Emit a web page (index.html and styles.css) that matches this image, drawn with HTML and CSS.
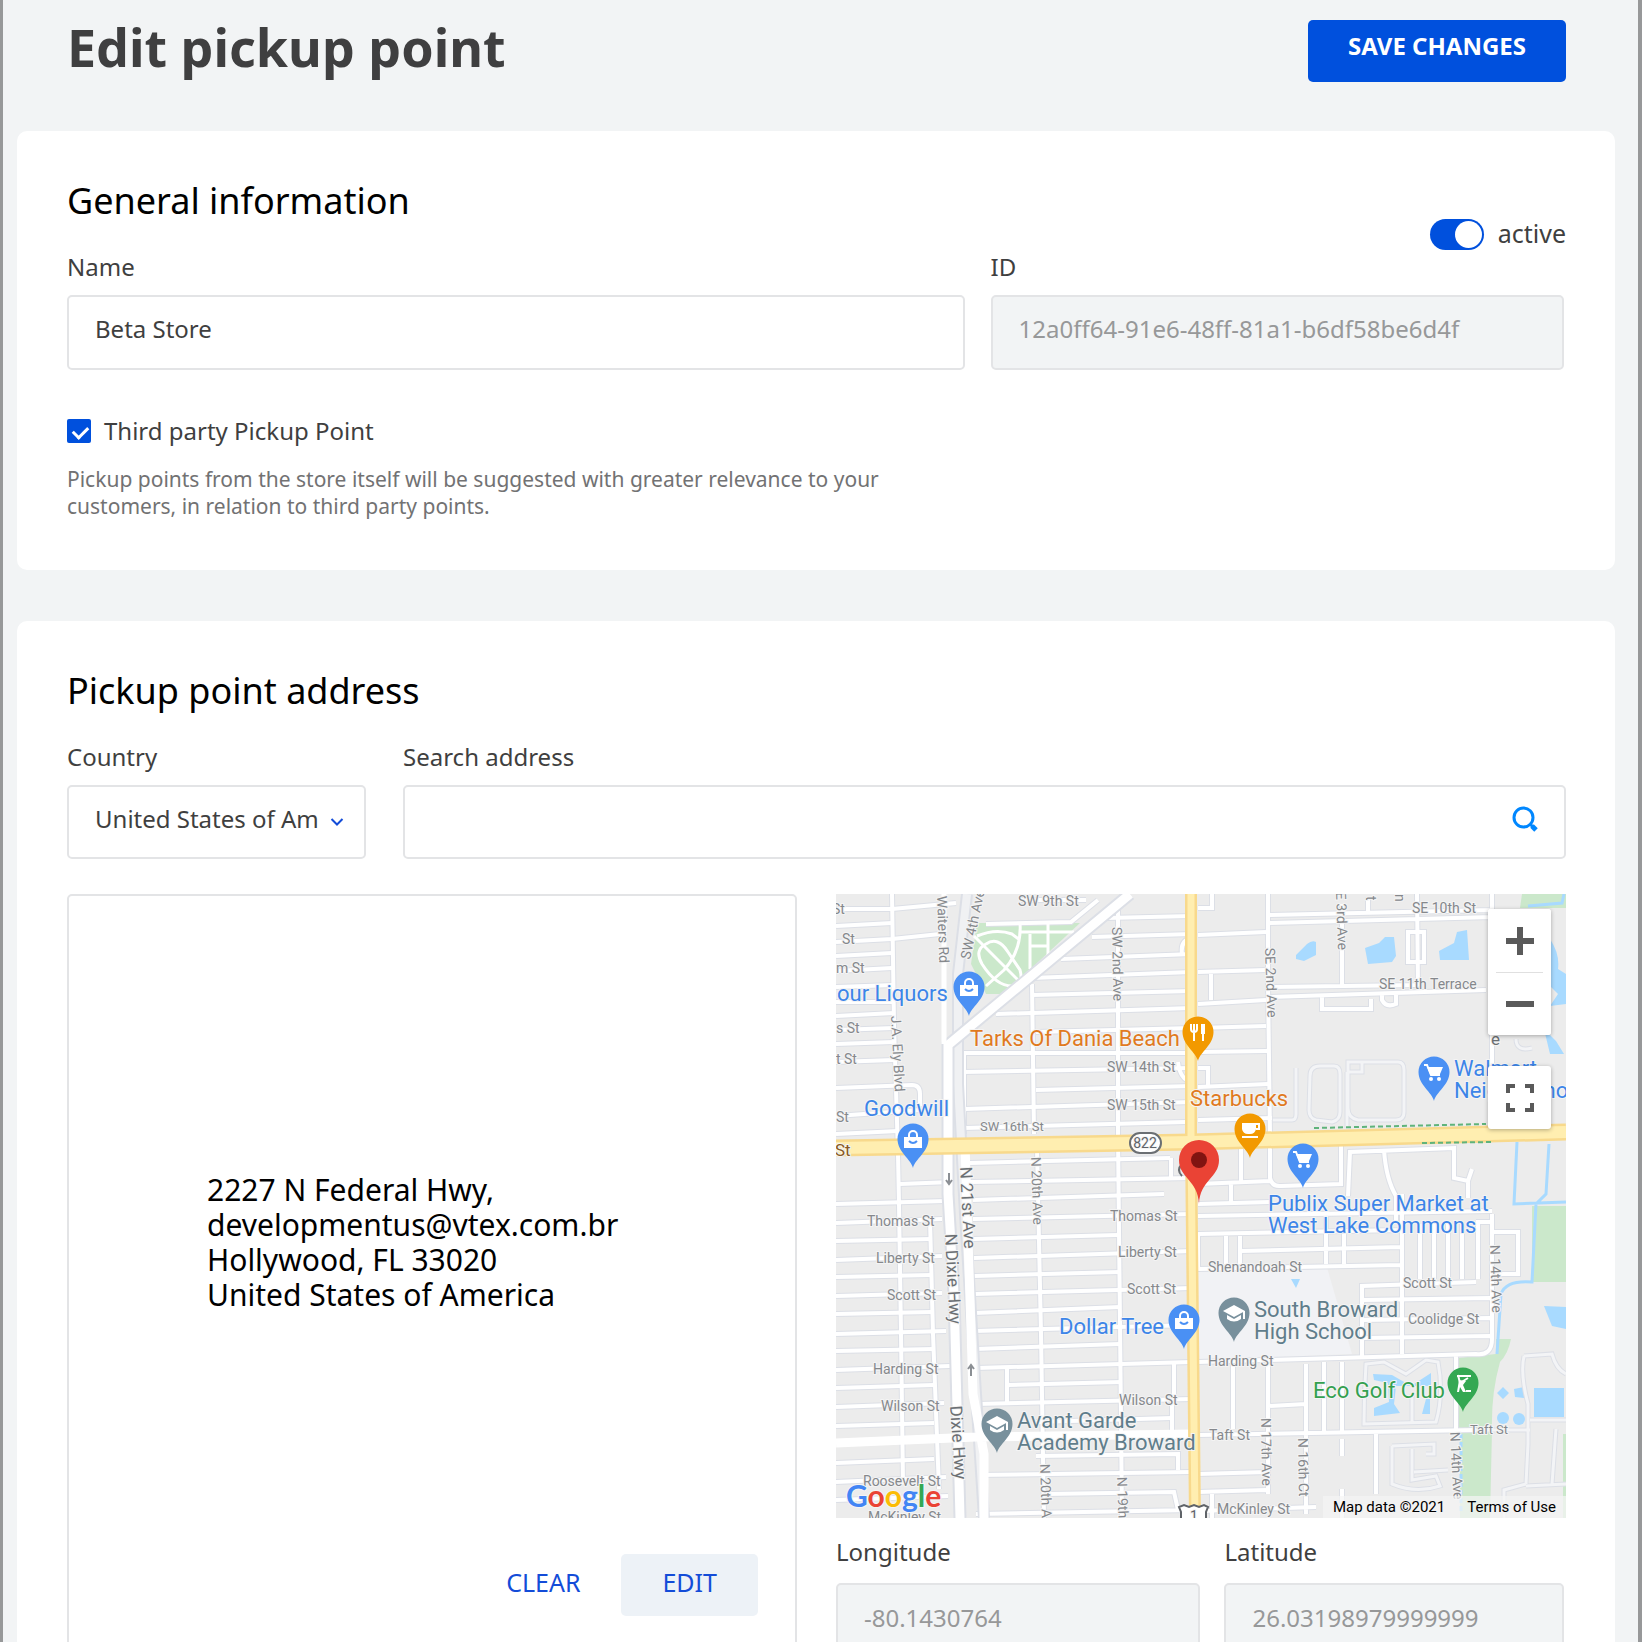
FILE: index.html
```html
<!DOCTYPE html>
<html lang="en">
<head>
<meta charset="utf-8">
<title>Edit pickup point</title>
<link rel="stylesheet" href="styles.css">
</head>
<body>
<main class="page">
  <header class="page-header">
    <h1 class="page-title">Edit pickup point</h1>
    <button class="button button-primary" type="button">SAVE CHANGES</button>
  </header>

  <section class="card">
    <div class="card-head">
      <h2 class="card-title">General information</h2>
      <label class="switch"><input class="switch-input" type="checkbox" checked>active</label>
    </div>
    <div class="row row-general">
      <div class="field">
        <label class="label" for="name">Name</label>
        <input class="input" id="name" type="text" value="Beta Store">
      </div>
      <div class="field">
        <label class="label" for="pickup-id">ID</label>
        <input class="input" id="pickup-id" type="text" value="12a0ff64-91e6-48ff-81a1-b6df58be6d4f" disabled>
      </div>
    </div>
    <label class="check"><input class="check-input" type="checkbox" checked>Third party Pickup Point</label>
    <p class="help">Pickup points from the store itself will be suggested with greater relevance to your customers, in relation to third party points.</p>
  </section>

  <section class="card">
    <div class="card-head">
      <h2 class="card-title">Pickup point address</h2>
    </div>
    <div class="row row-search">
      <div class="field">
        <label class="label" for="country">Country</label>
        <div class="control">
          <select class="input select" id="country"><option>United States of America</option></select>
          <svg class="chevron" viewBox="0 0 14 10" aria-hidden="true"><path d="M1.5 2 7 7.500 12.500 2"/></svg>
        </div>
      </div>
      <div class="field">
        <label class="label" for="search">Search address</label>
        <div class="control">
          <input class="input" id="search" type="text">
          <button class="search-button" type="button" aria-label="Search">
            <svg viewBox="0 0 26 26"><circle cx="11.500" cy="11.500" r="9.500"/><path d="M18 18l2.500 2.500"/><path class="handle" d="M20 20l4 4"/></svg>
          </button>
        </div>
      </div>
    </div>

    <div class="row row-address">
      <div class="address-box">
        <address class="address">2227 N Federal Hwy,<br>developmentus@vtex.com.br<br>Hollywood, FL 33020<br>United States of America</address>
        <div class="actions">
          <button class="button button-plain" type="button">CLEAR</button>
          <button class="button button-soft" type="button">EDIT</button>
        </div>
      </div>

      <div class="location">
        <div class="map">
          <svg class="map-canvas" viewBox="0 0 730 624" preserveAspectRatio="xMidYMid slice" role="img" aria-label="Map of the pickup point">
            <defs>
              <path id="pin" d="M0 29C-2 20-15.500 13-15.500 0A15.500 15.500 0 0 1 15.500 0C15.500 13 2 20 0 29Z"/>
              <g id="bag"><path d="M-9-2H9V9H-9Z" fill="#fff"/><path d="M-4-2V-4A4 4 0 0 1 4-4V-2" fill="none" stroke="#fff" stroke-width="2"/><path d="M-4 2Q0 6 4 2" fill="none" stroke="#4a90f4" stroke-width="2"/></g>
              <g id="cart"><path d="M-10-7H-7L-3 3H6" fill="none" stroke="#fff" stroke-width="2"/><path d="M-7-5H9L6 2H-4Z" fill="#fff"/><circle cx="-3" cy="7" r="2" fill="#fff"/><circle cx="5" cy="7" r="2" fill="#fff"/></g>
              <g id="cap"><path d="M0-8 11-2 0 4-11-2Z" fill="#fff"/><path d="M-7 2V6Q0 11 7 6V2L0 6Z" fill="#fff"/><path d="M10-2V6" stroke="#fff" stroke-width="2"/></g>
              <g id="roads" fill="none">
                <!-- west blocks -->
                <path d="M0 15H56L120 9M0 32 56 29M0 48 56 45 104 40M0 62 56 59M0 77 56 74M0 93 58 91M0 108H58M0 122 58 119M0 136 58 134M0 150 58 148M0 168 58 166M0 194 76 191Q84 191 84 200V212M0 222 84 216M0 240 62 237"/>
                <path d="M64 290 116 288M0 310 110 307M0 329 106 325M0 347 96 345M0 366 106 362M0 383 96 381M0 402 106 399M0 420 96 418M0 440 110 437M0 457 98 455M0 476 114 472M0 494 98 491M0 513 108 509M0 532 98 529M0 569 98 565M0 588 110 583M0 606 112 602"/>
                <path d="M56 0 58 130 62 260 63 310 65 440 67 590M94 325 97 440 103 595"/>
                <!-- centre blocks -->
                <path d="M150 30 235 28 262 6M185 6H250M270 24 356 22M256 43 356 40M225 65 356 60M195 84 356 78M196 101 356 97M160 120 356 114M200 138 356 134M128 159H350M127 178 356 174M200 196 356 192M128 215 356 208M128 234 350 228"/>
                <path d="M134 269 334 264M134 288 356 284M137 306 328 300M137 325 356 320M137 345 282 341M138 364 356 357M138 382 284 378M138 400 356 394M138 419 284 413M138 437 356 431M139 455 284 450M140 474 356 468M172 491 286 488M140 510 356 505M200 528 336 524M200 562 342 560V576M140 581 356 578M210 600 338 598 342 616M140 620 356 616"/>
                <path d="M196 90 198 240M282 4V240L284 430 286 624M201 254 205 440 208 624M171 474V510M338 470V505M336 505V540M128 160V240M356 44Q344 46 346 60M342 168Q344 186 356 188M335 264V284"/>
                <!-- east blocks -->
                <path d="M362 41 430 38M362 78 430 76M362 110 430 106M362 134 430 132M362 158 432 157M362 174H372V192M362 193 432 190M362 226 436 224M362 290 434 287M362 310 434 308M395 290V310M434 250V284Q436 293 445 292L505 290V250M405 255V288"/>
                <path d="M432 21 656 16M432 29 656 23M432 93 582 91M432 103 650 96M375 80V106M532 3V20M486 100V115H535V105M546 98V106Q550 114 560 110V98M572 38H588V68H572ZM581 0 582 92M506 10V92M432 0V90L434 240M656 0V240M376 0V14H362"/>
                <path d="M512 302 514 258 618 254V284L632 287 636 275M548 256Q550 285 560 302V330M632 287V304M362 322 656 317M362 340 565 336M362 375 565 371M405 357 565 353M362 339V375M390 342V370M404 342V370M490 322V370M508 340V370M566 300V460M584 330V385M598 330V385M612 330V385M626 330V385M642 330V385M656 328H640M656 338H682V380H660"/>
                <path d="M656 320V445Q656 462 640 460L362 468M526 462V392L640 388M526 406 654 404M526 426 654 424M526 444 654 442M397 470V535M432 470V600M432 512 470 510M488 468V540M506 468V540M506 545V562M362 541 640 536M362 580 432 578M362 598 430 596M376 600V624M470 470V620M540 540V600M506 595V624M620 462V535M362 617 480 613"/>
              </g>
              <!-- car parks, drives and private lanes -->
              <g id="lanes" fill="none">
                <path d="M436 226H456Q460 226 460 220V174M474 182Q474 172 484 172H498Q504 172 504 180V218Q504 226 496 228L480 226Q473 224 473 216ZM512 178V168H562Q568 168 568 176V218Q568 226 560 226H522Q512 224 512 214V178H526V168M511 178V234M680 145Q680 158 696 154"/>
                <path d="M530 470Q528 500 528 530L600 528Q608 500 602 468L590 466 570 480 548 468ZM576 500V530M556 552V590Q580 600 604 592L600 582 576 586V555M556 552 598 550V560H590M578 578 612 576M688 462 716 460Q720 475 730 480M688 462Q684 480 692 510V550L690 590M640 536H694M694 526H730M720 535 716 590M690 590 668 596V624M690 592 730 590"/>
              </g>
            </defs>
            <rect width="730" height="624" fill="#ececec"/>
            <path d="M362 374 490 370 516 460 362 466Z" fill="#f1f2f5"/>
            <g fill="#cbe8cb">
              <path d="M141 29H244L168 100H150L135 70Z"/>
              <path d="M686 0H730V14H684Z"/>
              <path d="M696 312H730V388H696ZM622 464 660 460V445H675Q672 460 664 468Q655 500 656 536L654 624H624V536H622Z"/>
              <path d="M727 540H730V624H727Z"/>
            </g>
            <g fill="#a8daff">
              <path d="M460 61 471 50Q476 46 480 48V61L468 67 460 65ZM529 54 543 49 549 43H558L560 62 556 68 532 70ZM603 57 618 49 621 38 631 36 633 66H604ZM714 45Q724 60 722 75L730 80V110L714 112 722 100 714 92ZM708 135 720 147 728 160H714ZM708 412 730 413V435L716 432ZM455 385H464L460 394ZM537 480 556 481 575 492 595 479V492L560 492 558 510 564 519 538 522V514L553 508 552 489 538 486ZM590 505H594V520H586ZM661 499 667 493 673 499 667 505ZM678 495 688 493V504L679 503ZM698 494H728V523H698Z"/>
              <circle cx="667" cy="524" r="6"/><circle cx="683" cy="525" r="6"/>
            </g>
            <path d="M681 248 678 310 730 308M713 250 710 300 700 310 696 388Q670 386 665 400L661 460M692 12 726 9 728 0" fill="none" stroke="#a8daff" stroke-width="3"/>
            <path d="M625 540V620" stroke="#a8daff" stroke-width="3" stroke-dasharray="5 3"/>
            <use href="#lanes" stroke="#dcdfe6" stroke-width="5"/>
            <use href="#lanes" stroke="#f3f4f6" stroke-width="3"/>
            <use href="#roads" stroke="#dcdfe6" stroke-width="6"/>
            <use href="#roads" stroke="#fff" stroke-width="4"/>
            <g fill="none" stroke="#fff" stroke-width="3">
              <path d="M141 42Q160 34 176 40L184 46M184 29Q186 56 168 76L150 92M138 42 184 88M150 50Q162 42 172 58L184 76Q188 90 176 92Q160 92 146 70Q138 56 150 50M184 38H238M194 52H212M212 30V62M194 40V75"/>
            </g>
            <!-- highways and railway -->
            <g fill="none">
              <path d="M131 0 122 80V190L129 320 140 500 148 624" stroke="#dcdfe6" stroke-width="12"/>
              <path d="M131 0 122 80V190L129 320 140 500 148 624" stroke="#f0f1f3" stroke-width="8"/>
              <path d="M294 0 112 151V300L118 400 124 624" stroke="#dcdfe6" stroke-width="13"/>
              <path d="M294 0 112 151V300L118 400 124 624M129 250 137 500 148 560V624M0 549 140 543 356 540" stroke="#fff" stroke-width="9"/>
              <path d="M108 0V150" stroke="#fff" stroke-width="5"/>
              <path d="M355 0V250L359 624" stroke="#f8d98c" stroke-width="12"/>
              <path d="M0 254 356 248 730 238" stroke="#f8d98c" stroke-width="17"/>
              <path d="M0 254 356 248 730 238" stroke="#ffeeb0" stroke-width="12"/>
              <path d="M355 0V250L359 624" stroke="#ffeeb0" stroke-width="7"/>
              <path d="M478 234 650 230M586 249 656 248" stroke="#5fb37b" stroke-width="2" stroke-dasharray="5 3"/>
            </g>
            <g class="street">
              <text x="182" y="12">SW 9th St</text><text x="-4" y="20">St</text><text x="6" y="50">St</text><text x="0" y="79">m St</text><text x="0" y="139">s St</text><text x="0" y="170">t St</text><text x="0" y="228">St</text>
              <text x="271" y="178">SW 14th St</text><text x="271" y="216">SW 15th St</text><text class="minor" x="144" y="237">SW 16th St</text>
              <text x="576" y="19">SE 10th St</text><text x="543" y="95">SE 11th Terrace</text>
              <text x="31" y="332">Thomas St</text><text x="40" y="369">Liberty St</text><text x="51" y="406">Scott St</text><text x="37" y="480">Harding St</text><text x="45" y="517">Wilson St</text><text x="27" y="592">Roosevelt St</text><text x="32" y="628">McKinley St</text>
              <text x="274" y="327">Thomas St</text><text x="282" y="363">Liberty St</text><text x="291" y="400">Scott St</text><text x="283" y="511">Wilson St</text>
              <text x="372" y="378">Shenandoah St</text><text x="567" y="394">Scott St</text><text x="572" y="430">Coolidge St</text><text x="372" y="472">Harding St</text><text x="373" y="546">Taft St</text><text class="minor" x="634" y="540">Taft St</text><text x="381" y="620">McKinley St</text>
              <text transform="translate(101 2) rotate(88)">Waiters Rd</text><text transform="translate(134 66) rotate(-78)">SW 4th Ave</text><text transform="translate(276 33) rotate(89)">SW 2nd Ave</text><text transform="translate(55 122) rotate(87)">J.A. Ely Blvd</text>
              <text transform="translate(429 54) rotate(88)">SE 2nd Ave</text><text transform="translate(500 -2) rotate(88)">E 3rd Ave</text><text transform="translate(530 2) rotate(90)">t</text><text transform="translate(559 0) rotate(90)">n</text>
              <text transform="translate(195 263) rotate(88)">N 20th Ave</text><text transform="translate(204 570) rotate(88)">N 20th A</text><text transform="translate(281 583) rotate(88)">N 19th</text><text transform="translate(654 351) rotate(88)">N 14th Ave</text><text transform="translate(425 524) rotate(89)">N 17th Ave</text><text transform="translate(462 544) rotate(89)">N 16th Ct</text><text transform="translate(614 538) rotate(87)">N 14th Ave</text>
            </g>
            <g class="avenue">
              <text transform="translate(124 273) rotate(87)">N 21st Ave</text><text transform="translate(109 340) rotate(87)">N Dixie Hwy</text><text transform="translate(114 512) rotate(86)">Dixie Hwy</text><text x="655" y="151">e</text>
            </g>
            <path d="M113 279V290M110 286 113 290 116 286M135 482V471M132 475 135 471 138 475" fill="none" stroke="#8b8f94" stroke-width="2"/>
            <text class="boulevard" x="-1" y="262">St</text>
            <rect x="294" y="239" width="31" height="20" rx="10" fill="#fff" stroke="#6b6f73" stroke-width="2"/>
            <text class="shield" x="309" y="254" text-anchor="middle">822</text>
            <path d="M345 626V618L343 613 348 611 353 613 358 611 363 613 368 611 372 613 370 618V626" fill="#fff" stroke="#5f6368" stroke-width="2"/>
            <text class="shield" x="358" y="627" text-anchor="middle">1</text>

            <g class="place shop">
              <text x="1" y="107">our Liquors</text><text x="28" y="222">Goodwill</text><text x="618" y="182">Walmart</text><text x="618" y="204">Neighborho</text><text x="432" y="317">Publix Super Market at</text><text x="432" y="339">West Lake Commons</text><text x="223" y="440">Dollar Tree</text>
            </g>
            <g class="place food"><text x="134" y="152">Tarks Of Dania Beach</text><text x="354" y="212">Starbucks</text></g>
            <g class="place school"><text x="181" y="534">Avant Garde</text><text x="181" y="556">Academy Broward</text><text x="418" y="423">South Broward</text><text x="418" y="445">High School</text></g>
            <g class="place golf"><text x="477" y="504">Eco Golf Club</text></g>

            <g transform="translate(133 93)"><use href="#pin" fill="#4a90f4"/><use href="#bag"/></g>
            <g transform="translate(77 245)"><use href="#pin" fill="#4a90f4"/><use href="#bag"/></g>
            <g transform="translate(348 426)"><use href="#pin" fill="#4a90f4"/><use href="#bag"/></g>
            <g transform="translate(598 178)"><use href="#pin" fill="#4a90f4"/><use href="#cart"/></g>
            <g transform="translate(467 265)"><use href="#pin" fill="#4a90f4"/><use href="#cart"/></g>
            <g transform="translate(161 530)"><use href="#pin" fill="#78909c"/><use href="#cap"/></g>
            <g transform="translate(398 419)"><use href="#pin" fill="#78909c"/><use href="#cap"/></g>
            <g transform="translate(362 138)"><use href="#pin" fill="#f29900"/><path d="M-7-8V-3Q-7 0-4 0T-1-3V-8M-4-8V9M5-8V9" fill="none" stroke="#fff" stroke-width="2"/><path d="M3-8H7V2H3Z" fill="#fff"/></g>
            <g transform="translate(414 235)"><use href="#pin" fill="#f29900"/><path d="M-8-6H6V0Q5 5 0 5H-2Q-7 5-8 0Z" fill="#fff"/><path d="M6-5H9V0H6M-8 8H8" fill="none" stroke="#fff" stroke-width="2"/></g>
            <g transform="translate(627 489)"><use href="#pin" fill="#34a853"/><path d="M-6-8H8V-6H-6Z" fill="#fff"/><path d="M-5-8-3 0 5-5M3 8H8" fill="none" stroke="#fff" stroke-width="2"/><path d="M-4-3 3-2 0 2 3 9H0L-3 4-4 9H-6Z" fill="#fff"/></g>
            <path d="M346 270Q340 276 346 282" fill="none" stroke="#6b6f73" stroke-width="2"/>
            <g transform="translate(363 266)"><path d="M0 44C-1 20-20 18-20 0A20 20 0 0 1 20 0C20 18 1 20 0 44Z" fill="#ea4335"/><circle r="8" fill="#811411"/></g>
            <text class="google" x="10" y="613"><tspan fill="#4285f4">G</tspan><tspan fill="#ea4335">o</tspan><tspan fill="#fbbc05">o</tspan><tspan fill="#4285f4">g</tspan><tspan fill="#34a853">l</tspan><tspan fill="#ea4335">e</tspan></text>
          </svg>
          <div class="map-controls">
            <div class="map-zoom">
              <button class="map-button" type="button" aria-label="Zoom in"><svg viewBox="0 0 28 28"><path d="M0 14H28M14 0V28"/></svg></button>
              <button class="map-button" type="button" aria-label="Zoom out"><svg viewBox="0 0 28 28"><path d="M0 14H28"/></svg></button>
            </div>
            <button class="map-button map-full" type="button" aria-label="Full screen"><svg viewBox="0 0 28 28"><path d="M2 9V2H9M19 2H26V9M26 19V26H19M9 26H2V19"/></svg></button>
          </div>
          <div class="map-legal"><span>Map data ©2021</span><a href="#terms">Terms of Use</a></div>
        </div>
        <div class="row row-coords">
          <div class="field">
            <label class="label" for="longitude">Longitude</label>
            <input class="input" id="longitude" type="text" value="-80.1430764" disabled>
          </div>
          <div class="field">
            <label class="label" for="latitude">Latitude</label>
            <input class="input" id="latitude" type="text" value="26.03198979999999" disabled>
          </div>
        </div>
      </div>
    </div>
  </section>
</main>
</body>
</html>
```
FILE: styles.css
```css
* {
  box-sizing: border-box;
}

body {
  margin: 0;
  font-family: "Noto Sans", sans-serif;
  font-size: 24px;
  line-height: 32px;
  color: #3f3f40;
  background: #f2f4f5;
}

.page {
  height: 100vh;
  overflow: hidden;
  padding: 0 23px 0 14px;
  border: solid #979899;
  border-width: 0 4px 0 3px;
}

.page-header {
  display: flex;
  justify-content: space-between;
  align-items: flex-start;
  padding: 20px 49px 49px 50px;
}

.page-title {
  margin: 0;
  font-size: 52px;
  line-height: 54px;
  font-weight: 700;
}

.card {
  padding: 46px 49px 50px 50px;
  margin-bottom: 51px;
  border-radius: 10px;
  background: #fff;
}

.card-head {
  display: flex;
  justify-content: space-between;
  min-height: 74px;
}

.card-title {
  margin: 0;
  font-size: 36px;
  line-height: 48px;
  font-weight: 400;
  color: #000;
}

.row {
  display: grid;
}

.row-general {
  grid-template-columns: 897fr 573fr;
  gap: 26px;
  padding-right: 2px;
}

.row-search {
  grid-template-columns: 299px 1fr;
  gap: 37px;
}

.row-address {
  grid-template-columns: 1fr 1fr;
  gap: 39px;
  margin-top: 35px;
}

.row-coords {
  grid-template-columns: 365fr 340fr;
  gap: 24px;
  margin-top: 18px;
  padding-right: 2px;
}

.field {
  display: flex;
  flex-direction: column;
  gap: 12px;
}

.row-coords .field {
  gap: 15px;
}

.control {
  position: relative;
}

.input {
  width: 100%;
  height: 74px;
  padding: 0 26px 6px;
  border: 2px solid #e3e4e6;
  border-radius: 5px;
  font: inherit;
  color: #3f3f40;
  background: #fff;
}

.row-general .input {
  height: 75px;
  padding-bottom: 8px;
}

.input:disabled {
  color: #979899;
  background: #f2f4f5;
  opacity: 1;
}

.select {
  appearance: none;
  padding-right: 46px;
}

.chevron {
  position: absolute;
  right: 22px;
  top: 32px;
  width: 14px;
  height: 10px;
  fill: none;
  stroke: #134cd8;
  stroke-width: 2;
}

.search-button {
  position: absolute;
  right: 28px;
  top: 21px;
  width: 26px;
  height: 26px;
  padding: 0;
  border: 0;
  background: none;
}

.search-button svg {
  display: block;
  fill: none;
  stroke: #0087ff;
  stroke-width: 3;
}

.search-button .handle {
  stroke-width: 5;
}

.switch {
  display: flex;
  align-items: flex-end;
  align-self: flex-end;
  gap: 14px;
  height: 36px;
  font-size: 25px;
  line-height: 36px;
}

.switch-input {
  appearance: none;
  width: 54px;
  height: 31px;
  margin: 0 0 1px;
  padding: 2px;
  border-radius: 16px;
  background: #0050dd;
}

.switch-input::before {
  content: "";
  display: block;
  width: 27px;
  height: 27px;
  margin-left: auto;
  border-radius: 50%;
  background: #fff;
}

.check {
  display: flex;
  align-items: center;
  gap: 13px;
  margin-top: 45px;
}

.check-input {
  appearance: none;
  width: 24px;
  height: 24px;
  margin: 0;
  border-radius: 2px;
  background: #0050dd;
}

.check-input::before {
  content: "";
  display: block;
  width: 12px;
  height: 7px;
  margin: 7px 6px;
  border: solid #fff;
  border-width: 0 0 3px 3px;
  transform: rotate(-45deg);
}

.help {
  max-width: 860px;
  margin: 19px 0 0;
  font-size: 21px;
  line-height: 27px;
  color: #727273;
}

.button {
  height: 62px;
  padding: 0 41px 6px;
  border: 0;
  border-radius: 5px;
  font: inherit;
  font-size: 25px;
}

.button-primary {
  padding: 0 40px 10px;
  font-size: 24px;
  font-weight: 700;
  color: #fff;
  background: #0050dd;
}

.button-plain {
  color: #134cd8;
  background: none;
}

.button-soft {
  color: #134cd8;
  background: #edf2f7;
}

.address-box {
  display: flex;
  flex-direction: column;
  justify-content: space-between;
  padding: 276px 37px 39px 138px;
  border: 2px solid #e3e4e6;
  border-radius: 5px;
}

.address {
  font-size: 30px;
  line-height: 35px;
  font-style: normal;
  color: #000;
}

.actions {
  display: flex;
  justify-content: flex-end;
}

.map {
  position: relative;
  height: 624px;
  overflow: hidden;
  font-family: Roboto, sans-serif;
}

.map-canvas {
  display: block;
  width: 100%;
  height: 100%;
}

.map-canvas text {
  paint-order: stroke;
  stroke: #f4f4f4;
  stroke-width: 2px;
}

.street {
  font-size: 14px;
  fill: #85888c;
}

.street .minor {
  font-size: 13px;
}

.avenue {
  font-size: 17px;
  fill: #6b6f73;
}

.boulevard {
  font-size: 17px;
  fill: #8a5a20;
}

.shield {
  font-size: 14px;
  fill: #5f6368;
}

.place {
  font-size: 22px;
}

.shop {
  fill: #3d85e8;
}

.food {
  fill: #e07a1f;
}

.school {
  fill: #607d8b;
}

.golf {
  fill: #34a050;
}

.google {
  font-family: Lato, sans-serif;
  font-size: 30px;
  font-weight: 700;
}

.map-controls {
  position: absolute;
  top: 15px;
  right: 15px;
  display: grid;
  gap: 31px;
}

.map-zoom,
.map-full {
  border-radius: 3px;
  background: #fff;
  box-shadow: 0 1px 4px rgba(0, 0, 0, 0.3);
}

.map-button {
  display: grid;
  place-items: center;
  width: 63px;
  height: 63px;
  padding: 0;
  border: 0;
  background: #fff;
}

.map-zoom .map-button {
  border-radius: 3px;
}

.map-zoom .map-button + .map-button {
  background: linear-gradient(#e0e0e0, #e0e0e0) center top / 47px 1px no-repeat #fff;
}

.map-button svg {
  width: 28px;
  height: 28px;
  fill: none;
  stroke: #5a5a5a;
  stroke-width: 6;
}

.map-full svg {
  stroke-width: 4;
}

.map-legal {
  position: absolute;
  right: 0;
  bottom: 0;
  display: flex;
  gap: 22px;
  padding: 0 10px;
  font-size: 15px;
  line-height: 22px;
  color: #000;
  background: rgba(245, 245, 245, 0.7);
}

.map-legal a {
  color: #000;
  text-decoration: none;
}
```
